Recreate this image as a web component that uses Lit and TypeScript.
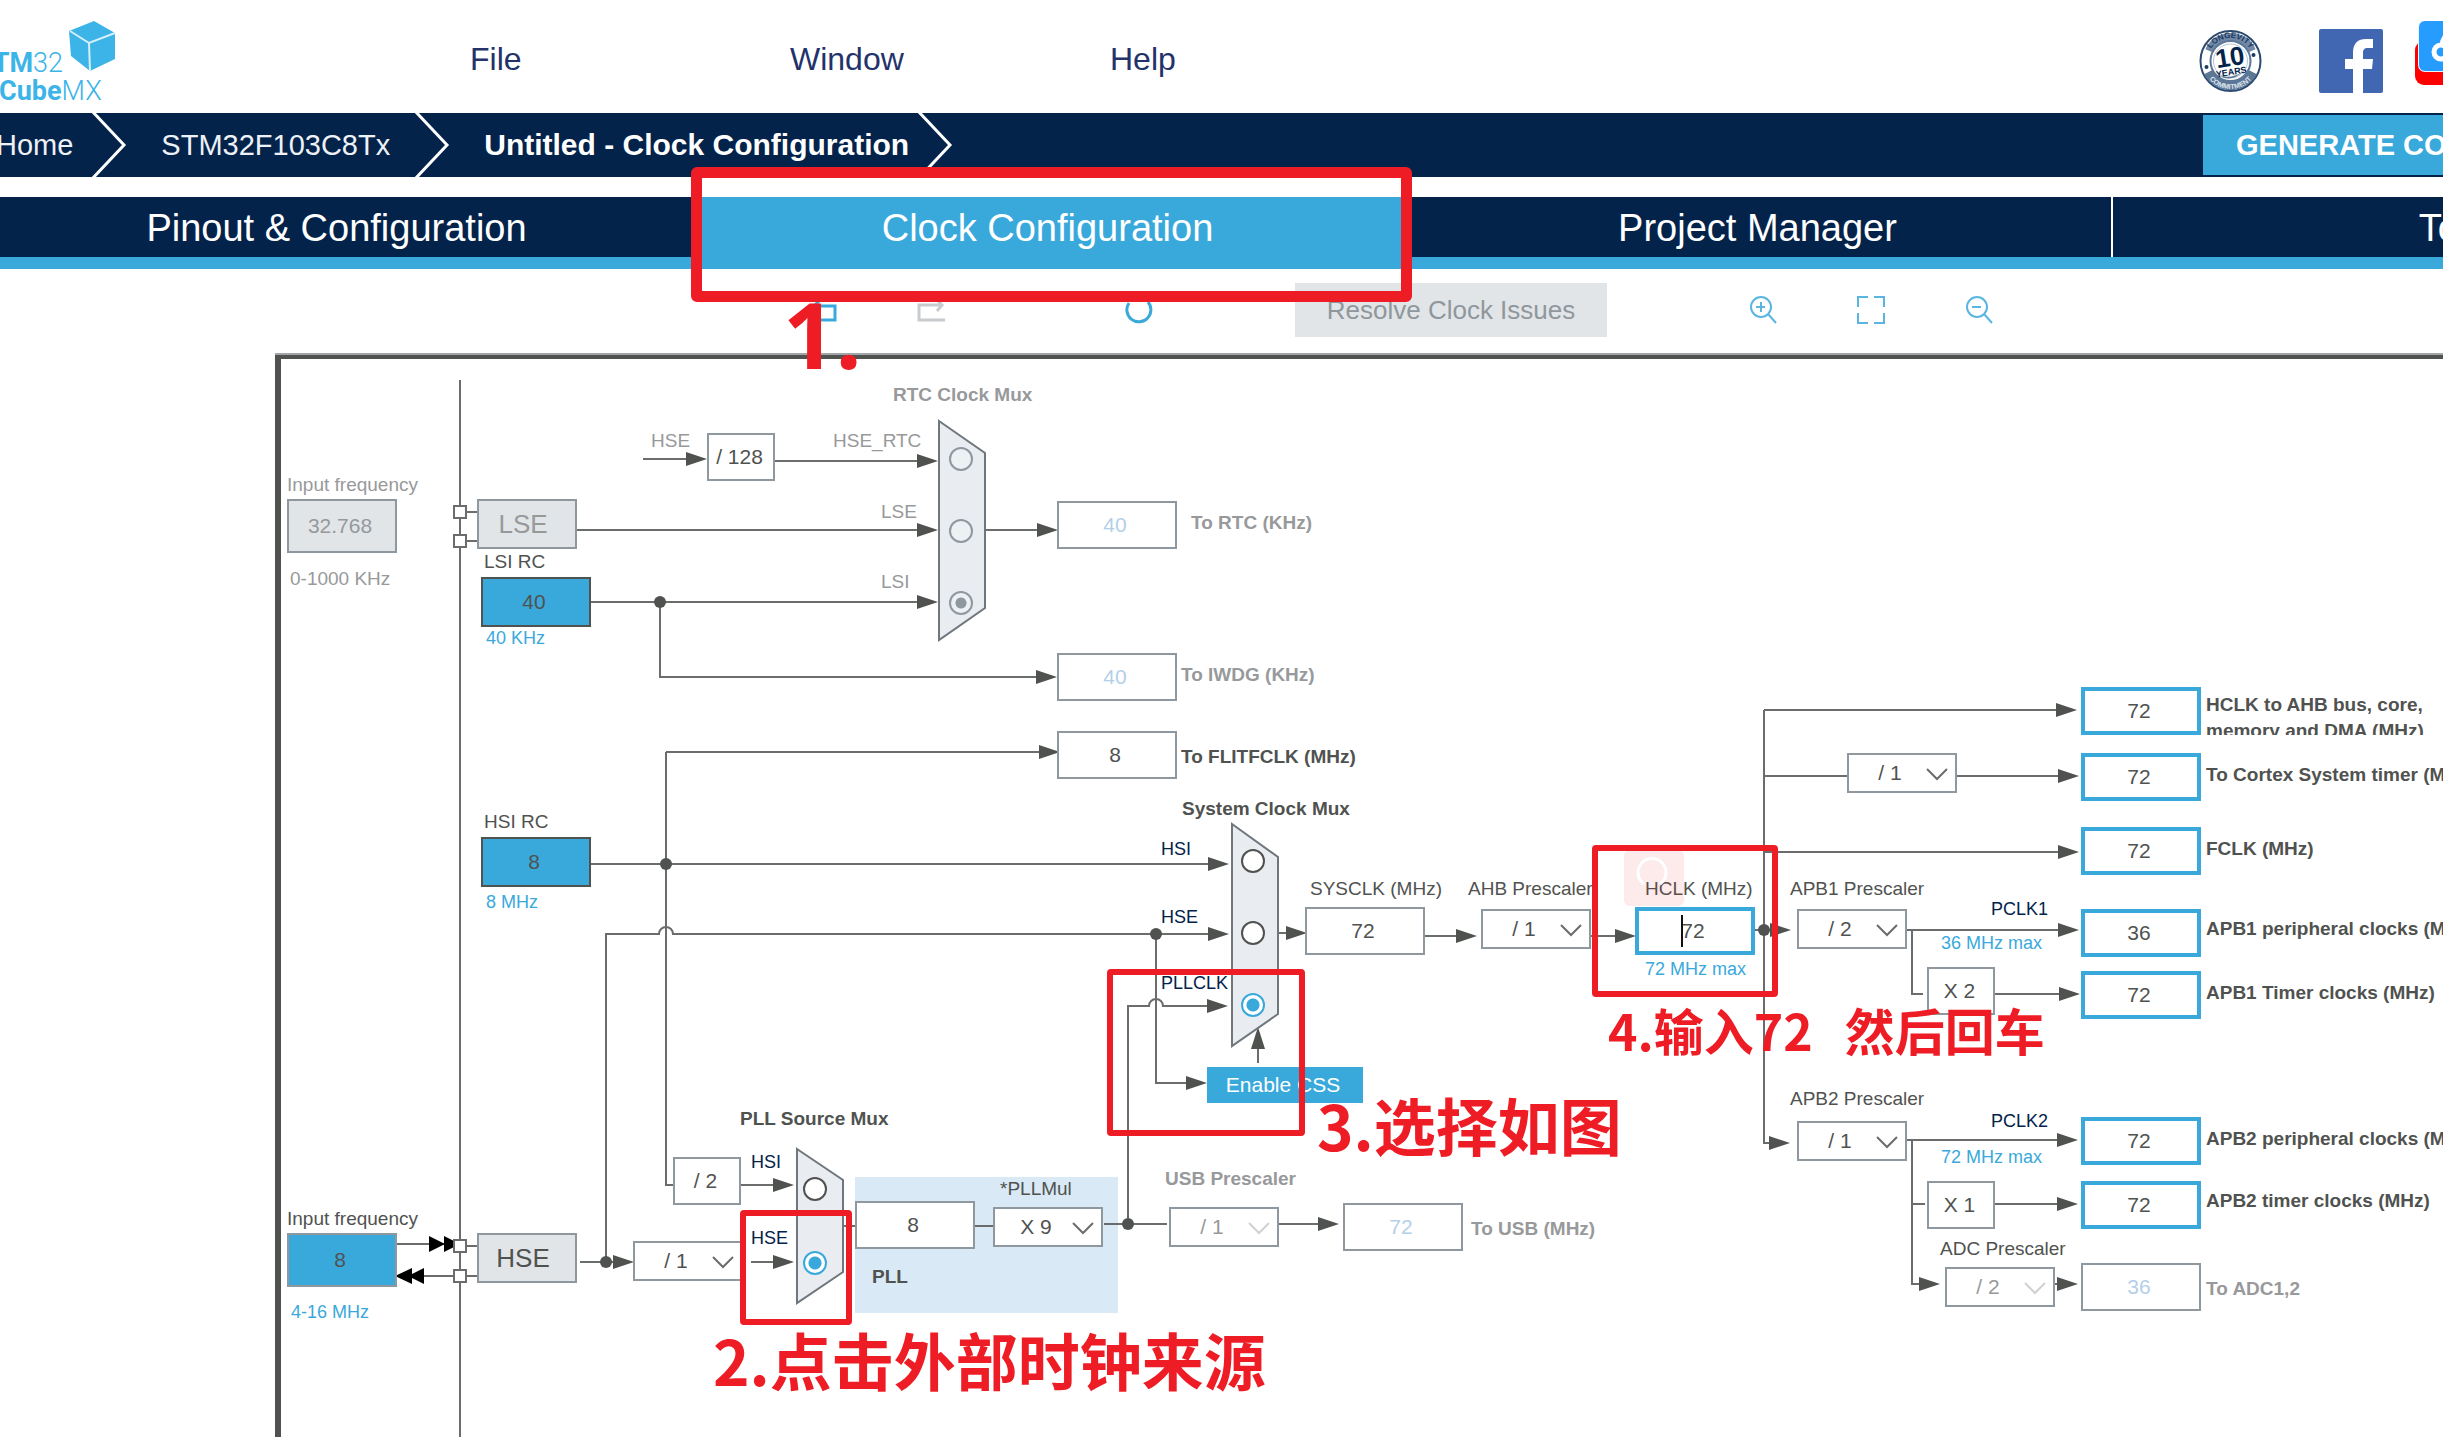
import { LitElement, html, svg, css } from "lit";
import { customElement, state } from "lit/decorators.js";
import { classMap } from "lit/directives/class-map.js";

/* Diagram coordinates are window coordinates; the canvas starts at this origin. */
const OX = 281;
const OY = 359;

const at = (x: number, y: number) => `left:${x - OX}px;top:${y - OY}px`;
const box = (x: number, y: number, w: number, h: number) =>
  `${at(x, y)};width:${w}px;height:${h}px`;

type Caption = { x: number; base: number; text: string; tone?: string; bold?: boolean; target?: string };
type Field = { id: string; name: string; x: number; y: number; w: number; h: number; value: string; kind: string };
type Divider = { id: string; name: string; x: number; y: number; options: string[]; off?: boolean };
type Factor = { x: number; y: number; text: string };
type Source = { group: string; value: string; x: number; y: number; off?: boolean };

const CAPTIONS: Caption[] = [
  { x: 287, base: 491, text: "Input frequency", tone: "muted", target: "lse-in" },
  { x: 290, base: 585, text: "0-1000 KHz", tone: "muted" },
  { x: 484, base: 568, text: "LSI RC", target: "lsi" },
  { x: 486, base: 644, text: "40 KHz", tone: "blue" },
  { x: 484, base: 828, text: "HSI RC", target: "hsi" },
  { x: 486, base: 908, text: "8 MHz", tone: "blue" },
  { x: 651, base: 447, text: "HSE", tone: "muted" },
  { x: 833, base: 447, text: "HSE_RTC", tone: "muted", target: "rtc-HSE_RTC" },
  { x: 881, base: 518, text: "LSE", tone: "muted", target: "rtc-LSE" },
  { x: 881, base: 588, text: "LSI", tone: "muted", target: "rtc-LSI" },
  { x: 893, base: 401, text: "RTC Clock Mux", tone: "muted", bold: true },
  { x: 1191, base: 529, text: "To RTC (KHz)", tone: "muted", bold: true, target: "to-rtc" },
  { x: 1181, base: 681, text: "To IWDG (KHz)", tone: "muted", bold: true, target: "to-iwdg" },
  { x: 1181, base: 763, text: "To FLITFCLK (MHz)", bold: true, target: "to-flitf" },
  { x: 1182, base: 815, text: "System Clock Mux", bold: true },
  { x: 1161, base: 855, text: "HSI", tone: "navy", target: "sys-HSI" },
  { x: 1161, base: 923, text: "HSE", tone: "navy", target: "sys-HSE" },
  { x: 1161, base: 989, text: "PLLCLK", tone: "navy", target: "sys-PLLCLK" },
  { x: 1310, base: 895, text: "SYSCLK (MHz)", target: "sysclk" },
  { x: 1468, base: 895, text: "AHB Prescaler", target: "ahb" },
  { x: 1645, base: 895, text: "HCLK (MHz)", target: "hclk" },
  { x: 1645, base: 975, text: "72 MHz max", tone: "blue" },
  { x: 1790, base: 895, text: "APB1 Prescaler", target: "apb1" },
  { x: 1991, base: 915, text: "PCLK1", tone: "navy" },
  { x: 1941, base: 949, text: "36 MHz max", tone: "blue" },
  { x: 1790, base: 1105, text: "APB2 Prescaler", target: "apb2" },
  { x: 1991, base: 1127, text: "PCLK2", tone: "navy" },
  { x: 1941, base: 1163, text: "72 MHz max", tone: "blue" },
  { x: 1940, base: 1255, text: "ADC Prescaler", target: "adc" },
  { x: 287, base: 1225, text: "Input frequency", target: "hse-in" },
  { x: 291, base: 1318, text: "4-16 MHz", tone: "blue" },
  { x: 740, base: 1125, text: "PLL Source Mux", bold: true },
  { x: 751, base: 1168, text: "HSI", tone: "navy", target: "pll-HSI" },
  { x: 751, base: 1244, text: "HSE", tone: "navy", target: "pll-HSE" },
  { x: 1000, base: 1195, text: "*PLLMul", target: "pllmul" },
  { x: 872, base: 1283, text: "PLL", bold: true },
  { x: 1165, base: 1185, text: "USB Prescaler", tone: "muted", bold: true, target: "usb" },
  { x: 1471, base: 1235, text: "To USB (MHz)", tone: "muted", bold: true, target: "to-usb" },
  { x: 2206, base: 781, text: "To Cortex System timer (MHz)", bold: true, target: "cortex" },
  { x: 2206, base: 855, text: "FCLK (MHz)", bold: true, target: "fclk" },
  { x: 2206, base: 935, text: "APB1 peripheral clocks (MHz)", bold: true, target: "apb1-per" },
  { x: 2206, base: 999, text: "APB1 Timer clocks (MHz)", bold: true, target: "apb1-tim" },
  { x: 2206, base: 1145, text: "APB2 peripheral clocks (MHz)", bold: true, target: "apb2-per" },
  { x: 2206, base: 1207, text: "APB2 timer clocks (MHz)", bold: true, target: "apb2-tim" },
  { x: 2206, base: 1295, text: "To ADC1,2", tone: "muted", bold: true, target: "to-adc" },
];

const FIELDS: Field[] = [
  { id: "lse-in", name: "LSE input frequency", x: 287, y: 499, w: 110, h: 54, value: "32.768", kind: "idle" },
  { id: "lsi", name: "LSI RC", x: 481, y: 577, w: 110, h: 50, value: "40", kind: "source" },
  { id: "hsi", name: "HSI RC", x: 481, y: 837, w: 110, h: 50, value: "8", kind: "source" },
  { id: "hse-in", name: "HSE input frequency", x: 287, y: 1233, w: 110, h: 54, value: "8", kind: "source editable" },
  { id: "to-rtc", name: "To RTC", x: 1057, y: 501, w: 120, h: 48, value: "40", kind: "off" },
  { id: "to-iwdg", name: "To IWDG", x: 1057, y: 653, w: 120, h: 48, value: "40", kind: "off" },
  { id: "to-flitf", name: "To FLITFCLK", x: 1057, y: 731, w: 120, h: 48, value: "8", kind: "" },
  { id: "sysclk", name: "SYSCLK", x: 1305, y: 907, w: 120, h: 48, value: "72", kind: "" },
  { id: "hclk", name: "HCLK", x: 1635, y: 907, w: 120, h: 48, value: "72", kind: "bus" },
  { id: "pll-in", name: "PLL input", x: 855, y: 1201, w: 120, h: 48, value: "8", kind: "" },
  { id: "to-usb", name: "To USB", x: 1343, y: 1203, w: 120, h: 48, value: "72", kind: "off" },
  { id: "ahb-bus", name: "HCLK to AHB bus", x: 2081, y: 687, w: 120, h: 48, value: "72", kind: "bus" },
  { id: "cortex", name: "Cortex System timer", x: 2081, y: 753, w: 120, h: 48, value: "72", kind: "bus" },
  { id: "fclk", name: "FCLK", x: 2081, y: 827, w: 120, h: 48, value: "72", kind: "bus" },
  { id: "apb1-per", name: "APB1 peripheral clocks", x: 2081, y: 909, w: 120, h: 48, value: "36", kind: "bus" },
  { id: "apb1-tim", name: "APB1 Timer clocks", x: 2081, y: 971, w: 120, h: 48, value: "72", kind: "bus" },
  { id: "apb2-per", name: "APB2 peripheral clocks", x: 2081, y: 1117, w: 120, h: 48, value: "72", kind: "bus" },
  { id: "apb2-tim", name: "APB2 timer clocks", x: 2081, y: 1181, w: 120, h: 48, value: "72", kind: "bus" },
  { id: "to-adc", name: "To ADC1,2", x: 2081, y: 1263, w: 120, h: 48, value: "36", kind: "off" },
];

const DIVIDERS: Divider[] = [
  { id: "cortex-div", name: "Cortex prescaler", x: 1847, y: 753, options: ["/ 1", "/ 8"] },
  { id: "ahb", name: "AHB Prescaler", x: 1481, y: 909, options: ["/ 1", "/ 2", "/ 4"] },
  { id: "apb1", name: "APB1 Prescaler", x: 1797, y: 909, options: ["/ 2", "/ 1", "/ 4"] },
  { id: "apb2", name: "APB2 Prescaler", x: 1797, y: 1121, options: ["/ 1", "/ 2", "/ 4"] },
  { id: "adc", name: "ADC Prescaler", x: 1945, y: 1267, options: ["/ 2", "/ 4", "/ 6"], off: true },
  { id: "hse-div", name: "HSE divider", x: 633, y: 1241, options: ["/ 1", "/ 2"] },
  { id: "pllmul", name: "PLLMul", x: 993, y: 1207, options: ["X 9", "X 8", "X 2"] },
  { id: "usb", name: "USB Prescaler", x: 1169, y: 1207, options: ["/ 1", "/ 1.5"], off: true },
];

const FACTORS: Factor[] = [
  { x: 707, y: 433, text: "/ 128" },
  { x: 673, y: 1157, text: "/ 2" },
  { x: 1927, y: 967, text: "X 2" },
  { x: 1927, y: 1181, text: "X 1" },
];

const SOURCES: Source[] = [
  { group: "rtc", value: "HSE_RTC", x: 961, y: 459, off: true },
  { group: "rtc", value: "LSE", x: 961, y: 531, off: true },
  { group: "rtc", value: "LSI", x: 961, y: 603, off: true },
  { group: "sys", value: "HSI", x: 1253, y: 861 },
  { group: "sys", value: "HSE", x: 1253, y: 933 },
  { group: "sys", value: "PLLCLK", x: 1253, y: 1005 },
  { group: "pll", value: "HSI", x: 815, y: 1189 },
  { group: "pll", value: "HSE", x: 815, y: 1263 },
];

const WIRES = [
  "M460 380V1500",
  "M466 512H478M466 541H478M466 1246H478M466 1276H478",
  "M643 459H690",
  "M775 461H920",
  "M577 530H920",
  "M986 530H1040",
  "M591 602H920",
  "M660 602V677H1040",
  "M591 864H1210",
  "M666 752V1185H674",
  "M666 752H1045",
  "M606 1262V934H659A7 7 0 0 1 673 934H1210",
  "M1156 934V1083H1190",
  "M1128 1224V1006H1149A7 7 0 0 1 1163 1006H1210",
  "M1258 1063V1045",
  "M1278 933H1295",
  "M1425 936H1460",
  "M1591 936H1618",
  "M1755 930H1775",
  "M1764 710V1143H1772",
  "M1764 710H2060",
  "M1764 776H1848M1957 776H2060",
  "M1764 852H2062",
  "M1907 930H2062",
  "M1912 930V994H1923M1995 994H2062",
  "M1907 1140H2060",
  "M1912 1140V1284H1922",
  "M1912 1204H1925M1995 1204H2060",
  "M2055 1284H2060",
  "M580 1262H622",
  "M741 1185H776",
  "M751 1262H776",
  "M843 1226H856M975 1226H994",
  "M1104 1224H1167",
  "M1279 1224H1320",
];

/* Tip of each right-pointing arrowhead. */
const ARROWS = [
  [707, 459], [938, 461], [938, 530], [938, 602], [1058, 530], [1057, 677], [1060, 752],
  [1229, 864], [1229, 934], [1228, 1006], [1207, 1083], [1307, 933], [1477, 936], [1636, 936],
  [1791, 930], [1790, 1143], [2077, 710], [2079, 776], [2079, 852], [2079, 930], [2080, 994],
  [2078, 1140], [2078, 1204], [2078, 1284], [1940, 1284], [634, 1262], [794, 1185], [794, 1262],
  [1339, 1224],
];

const DOTS = [[660, 602], [666, 864], [1156, 934], [1764, 930], [606, 1262], [1128, 1224]];
const PINS = [[454, 506], [454, 535], [454, 1240], [454, 1270]];

@customElement("crumb-arrow")
class CrumbArrow extends LitElement {
  static styles = css`
    :host { display: block; width: 36px; height: 64px; flex: none; }
    svg { display: block; }
  `;
  render() {
    return html`<svg width="36" height="64" viewBox="0 0 36 64" fill="none" stroke="#fff" stroke-width="3" aria-hidden="true">
      <path d="M1 -2L33 32L1 66" />
    </svg>`;
  }
}

@customElement("app-header")
class AppHeader extends LitElement {
  static styles = css`
    :host { display: block; }
    .bar { display: flex; align-items: center; height: 113px; overflow: hidden; }
    .logo { flex: none; width: 470px; height: 113px; display: block; }
    .menu { display: flex; margin-top: 5px; }
    .menu button {
      width: 320px; padding: 0; border: 0; background: none; text-align: left;
      font: 32px/40px "Liberation Sans", Arial, sans-serif; color: #24326a;
    }
    .links { display: flex; margin-left: auto; flex: none; align-items: center; margin-right: -37px; height: 113px; }
    .links a, .links svg { display: block; }
    .ten { margin: 8px 57px 0 0; }
    .fb { margin: 9px 32px 0 0; }
    .tube { margin: -6px 0 0; }
  `;
  render() {
    return html`<header class="bar">
      <svg class="logo" viewBox="0 0 470 113" role="img" aria-label="STM32 CubeMX">
        <g fill="#3cb4e7" font-family="Roboto, 'Liberation Sans', sans-serif" font-size="27">
          <text x="63" y="72" text-anchor="end"><tspan font-weight="700">STM</tspan><tspan font-weight="300">32</tspan></text>
          <text x="-1" y="100"><tspan font-weight="700">Cube</tspan><tspan font-weight="300">MX</tspan></text>
          <path d="M94 21L115 33V59L90 71L71 56L69 31Z" />
        </g>
        <path d="M70 31L89 43L115 33M89 43L90 71" fill="none" stroke="#d6effa" stroke-width="2" />
      </svg>
      <nav class="menu" aria-label="Main menu">
        <button>File</button><button>Window</button><button>Help</button>
      </nav>
      <div class="links">
        <a class="ten" href="#longevity" aria-label="10 years longevity commitment">
          <svg width="63" height="64" viewBox="0 0 62 64" font-family="'Liberation Sans',sans-serif" font-weight="700">
            <circle cx="31" cy="32" r="30" fill="#fff" stroke="#2c4a70" stroke-width="2" />
            <path d="M10 22A23 23 0 0 1 52 22" fill="none" stroke="#7088a5" stroke-width="9" />
            <path d="M9 43A25 25 0 0 0 53 43" fill="none" stroke="#5c7696" stroke-width="10" />
            <circle cx="31" cy="32" r="20" fill="#fff" stroke="#5c7696" stroke-width="2" />
            <circle cx="31" cy="32" r="17" fill="none" stroke="#b7c3d2" stroke-width="1" />
            <path id="arc-top" d="M8 32A23 23 0 0 1 54 32" fill="none" />
            <path id="arc-low" d="M3 32A28 28 0 0 0 59 32" fill="none" />
            <text font-size="8" fill="#1b3a63"><textPath href="#arc-top" startOffset="50%" text-anchor="middle">LONGEVITY</textPath></text>
            <text font-size="7" fill="#dfe6ee"><textPath href="#arc-low" startOffset="50%" text-anchor="middle">COMMITMENT</textPath></text>
            <circle cx="7" cy="38" r="2" fill="#1b3a63" /><circle cx="54" cy="26" r="2" fill="#1b3a63" />
            <g transform="rotate(-9 31 32)" fill="#03234b" text-anchor="middle">
              <text x="31" y="37" font-size="26">10</text>
              <text x="30" y="46" font-size="9">YEARS</text>
            </g>
            <path d="M20 47Q32 54 44 42Q34 50 20 47Z" fill="#5c7696" />
          </svg>
        </a>
        <a class="fb" href="#facebook" aria-label="Facebook">
          <svg width="64" height="64" viewBox="0 0 64 64">
            <rect width="64" height="64" rx="2" fill="#4267b2" />
            <path d="M34 64V40H26V30H34V24C34 14 39 10 47 10H54V19H49C45 19 44 21 44 24V30H54L53 40H44V64Z" fill="#fff" />
          </svg>
        </a>
        <a class="tube" href="#share" aria-label="Video channel and cloud storage">
          <svg width="65" height="66" viewBox="0 0 65 66">
            <rect x="0" y="20" width="90" height="44" rx="9" fill="#f00" />
            <rect x="3" y="-1" width="80" height="52" rx="7" fill="#eaf4ff" />
            <rect x="4" y="0" width="80" height="50" rx="6" fill="#279cff" />
            <g fill="none" stroke="#fff" stroke-width="5"><circle cx="26" cy="31" r="7" /><path d="M27 24A13 13 0 0 1 50 16" /></g>
          </svg>
        </a>
      </div>
    </header>`;
  }
}

@customElement("app-nav")
class AppNav extends LitElement {
  static styles = css`
    :host { display: block; font-family: "Liberation Sans", Arial, sans-serif; overflow: hidden; }
    .crumbs { display: flex; align-items: center; height: 64px; background: #03234b; color: #fff; }
    .crumbs a { color: #eef1f5; text-decoration: none; font-size: 29px; line-height: 40px; white-space: nowrap; }
    .crumbs .home { margin: 0 18px 0 -4px; }
    .crumbs .chip { margin: 0 24px 0 34px; }
    .crumbs .current { margin: 0 8px 0 34px; font-size: 30px; font-weight: 700; color: #fff; }
    .generate {
      margin-left: auto; flex: none; height: 60px; width: 300px; margin-right: -60px; padding: 0 0 0 33px;
      border: 0; background: #39a9dc; color: #fff; text-align: left; white-space: nowrap;
      font: 700 29px/40px "Liberation Sans", Arial, sans-serif;
    }
    .tabs {
      display: grid; grid-template-columns: 709fr 713fr 709fr 700fr; width: calc(100% + 388px);
      margin: 20px 0 0 -18px; border-bottom: 12px solid #39a9dc; background: #03234b;
    }
    .tabs button {
      height: 60px; padding: 2px 0 0; border: 0; background: #03234b; color: #fff;
      font: 38px/58px "Liberation Sans", Arial, sans-serif;
    }
    .tabs .active { background: #39a9dc; }
    .tabs .split { border-right: 2px solid #fff; }
  `;
  render() {
    return html`
      <nav class="crumbs" aria-label="Breadcrumb">
        <a class="home" href="#home">Home</a><crumb-arrow></crumb-arrow>
        <a class="chip" href="#chip">STM32F103C8Tx</a><crumb-arrow></crumb-arrow>
        <a class="current" href="#clock">Untitled - Clock Configuration</a><crumb-arrow></crumb-arrow>
        <button class="generate">GENERATE CODE</button>
      </nav>
      <div class="tabs" role="tablist">
        <button role="tab">Pinout &amp; Configuration</button>
        <button role="tab" class="active" aria-selected="true">Clock Configuration</button>
        <button role="tab" class="split">Project Manager</button>
        <button role="tab">Tools</button>
      </div>
    `;
  }
}

@customElement("clock-toolbar")
class ClockToolbar extends LitElement {
  static styles = css`
    :host { display: block; }
    .bar { display: flex; align-items: center; gap: 142px; height: 82px; padding: 0 0 4px 809px; }
    .group { display: flex; gap: 80px; }
    .reload { margin-left: 38px; }
    button { padding: 0; border: 0; background: none; flex: none; }
    svg { display: block; fill: none; stroke: #39a9dc; stroke-width: 2; }
    .thin { stroke: #5ab6e1; }
    .faded svg { stroke: #c9cccf; }
    .resolve {
      width: 312px; height: 54px; background: #e1e5e8; color: #8f979c; white-space: nowrap;
      font: 26px/54px "Liberation Sans", Arial, sans-serif;
    }
  `;
  render() {
    return html`<div class="bar" role="toolbar" aria-label="Clock tools">
      <div class="group">
        <button aria-label="Undo"><svg width="28" height="28"><path d="M2 24H26V10H5M11 4L5 10L11 16" stroke-width="3" /></svg></button>
        <button class="faded" aria-label="Redo" disabled><svg width="28" height="28"><path d="M28 24H2V9H25M18 2L25 9L20 15" stroke-width="3" /></svg></button>
      </div>
      <button class="reload" aria-label="Reset"><svg width="28" height="28"><path d="M4 7A12 12 0 1 0 23 6" stroke-width="3" /></svg></button>
      <button class="resolve" disabled>Resolve Clock Issues</button>
      <div class="group">
        <button aria-label="Zoom in"><svg class="thin" width="28" height="28"><circle cx="12" cy="11" r="10" /><path d="M7 11H16M12 6V16M19 18L27 27" /></svg></button>
        <button aria-label="Fit"><svg class="thin" width="28" height="28"><path d="M1 11V1H11M17 1H27V11M27 17V27H17M11 27H1V17" /></svg></button>
        <button aria-label="Zoom out"><svg class="thin" width="28" height="28"><circle cx="12" cy="11" r="10" /><path d="M7 11H16M19 18L27 27" /></svg></button>
      </div>
    </div>`;
  }
}

@customElement("clock-diagram")
class ClockDiagram extends LitElement {
  static styles = css`
    :host {
      display: block; position: relative; overflow: hidden; min-height: 1000px;
      font-family: "Liberation Sans", Arial, sans-serif; color: #505250;
    }
    .wires, .caption, .cell, .factor, .divider, .chevron, .mux, .osc, .css-button, .pll, .caret, .wrapped {
      position: absolute; box-sizing: border-box;
    }
    .wires { left: 0; top: 0; width: 100%; height: 100%; overflow: hidden; }
    .wire { fill: none; stroke: #6b6d6c; stroke-width: 2; }
    .head { fill: #505250; }
    .pin { fill: #fff; stroke: #6b6d6c; stroke-width: 2; }
    .shape { fill: #e9edf1; stroke: #6f777c; stroke-width: 2; }
    .ext { fill: #000; }
    .caption { font-size: 19px; line-height: 24px; white-space: nowrap; }
    .bold { font-weight: 700; }
    .muted { color: #97999b; }
    .blue { color: #39a9dc; font-size: 18px; }
    .navy { color: #03234b; font-size: 18px; }
    .wrapped { width: 236px; height: 43px; overflow: hidden; font-size: 19px; line-height: 26px; font-weight: 700; white-space: nowrap; }
    .cell {
      border: 2px solid #8f979f; background: #fff; color: #505250; padding: 0 4px 0 0; margin: 0;
      text-align: center; font: 21px/24px "Liberation Sans", Arial, sans-serif; border-radius: 0; outline: 0;
    }
    .bus { border: 4px solid #39a9dc; }
    .off { color: #b4cfe9; }
    .idle { background: #e1e5e8; color: #95999c; }
    .source { background: #39a9dc; border-color: #505250; }
    .editable { border-color: #8f979f; }
    .factor {
      width: 68px; height: 48px; border: 2px solid #8f979f; background: #fff; padding-right: 3px;
      display: flex; align-items: center; justify-content: center; font-size: 21px;
    }
    .divider {
      width: 110px; height: 40px; border: 2px solid #8f979f; border-radius: 0; background: #fff; color: #505250;
      appearance: none; padding: 0 40px 0 16px; margin: 0; text-align: center; opacity: 1;
      font: 21px/36px "Liberation Sans", Arial, sans-serif;
    }
    .divider:disabled { color: #97999b; }
    .chevron { fill: none; stroke: #6b6d6c; stroke-width: 2; pointer-events: none; }
    .pale { stroke: #cfd1d2; }
    .mux {
      appearance: none; width: 24px; height: 24px; margin: 0; border: 2px solid #505250; border-radius: 50%;
      background: #fff;
    }
    .mux:checked { border-color: #39a9dc; background: radial-gradient(circle, #39a9dc 6px, #fff 7px); }
    .mux:disabled { border-color: #8f979f; background: #eef1f4; }
    .mux:disabled:checked { background: radial-gradient(circle, #8f979f 5px, #eef1f4 6px); }
    .osc {
      width: 100px; height: 50px; border: 2px solid #8f979f; background: #e1e5e8; color: #505250; padding: 0 8px 0 0;
      font: 26px/40px "Liberation Sans", Arial, sans-serif;
    }
    .osc:disabled { color: #97999b; }
    .css-button {
      border: 0; padding: 0 4px 0 0; background: #39a9dc; color: #fff;
      font: 21px/36px "Liberation Sans", Arial, sans-serif;
    }
    .pll { background: #dae9f6; }
    .caret { width: 2px; height: 32px; background: #111; }
  `;

  @state() private picked: Record<string, string> = { rtc: "LSI", sys: "PLLCLK", pll: "HSE" };

  private pick(group: string, value: string) {
    this.picked = { ...this.picked, [group]: value };
  }

  private caption(c: Caption) {
    const cls = classMap({ caption: true, bold: !!c.bold, [c.tone ?? "plain"]: true });
    const pos = at(c.x, c.base - 18);
    return c.target
      ? html`<label class=${cls} style=${pos} for=${c.target}>${c.text}</label>`
      : html`<span class=${cls} style=${pos}>${c.text}</span>`;
  }

  render() {
    return html`
      <div class="pll" style=${box(855, 1177, 263, 136)}></div>
      <svg class="wires" aria-hidden="true">
        <g transform="translate(${-OX} ${-OY})">
          <path class="wire" d=${WIRES.join("")} />
          ${ARROWS.map(([x, y]) => svg`<path class="head" d="M${x} ${y}l-21 -7v14z" />`)}
          <path class="head" d="M1258 1027l-7 22h14z" />
          ${DOTS.map(([x, y]) => svg`<circle class="head" cx=${x} cy=${y} r="6" />`)}
          <path class="wire" d="M397 1244H454M420 1276H454" />
          <path class="ext" d="M429 1236L445 1244L429 1252ZM444 1236L460 1244L444 1252ZM412 1268L395 1276L412 1284ZM424 1268L408 1276L424 1284Z" />
          ${PINS.map(([x, y]) => svg`<rect class="pin" x=${x} y=${y} width="12" height="12" />`)}
          <path class="shape" d="M939 421L985 453V608L939 640Z" />
          <path class="shape" d="M1232 824L1278 857V1014L1232 1046Z" />
          <path class="shape" d="M797 1149L843 1180V1272L797 1303Z" />
        </g>
      </svg>
      ${CAPTIONS.map((c) => this.caption(c))}
      <label class="wrapped" for="ahb-bus" style=${at(2206, 692)}>HCLK to AHB bus, core,<br />memory and DMA (MHz)</label>
      <button class="osc" style=${at(477, 499)} disabled>LSE</button>
      <button class="osc" style=${at(477, 1233)}>HSE</button>
      <button class="css-button" style=${box(1207, 1067, 156, 36)}>Enable CSS</button>
      ${FACTORS.map((f) => html`<div class="factor" style=${at(f.x, f.y)}>${f.text}</div>`)}
      ${FIELDS.map(
        (f) => html`<input class="cell ${f.kind}" id=${f.id} aria-label=${f.name} style=${box(f.x, f.y, f.w, f.h)} .value=${f.value} />`,
      )}
      <span class="caret" style=${at(1681, 915)}></span>
      ${DIVIDERS.map(
        (d) => html`<select class="divider" id=${d.id} aria-label=${d.name} style=${at(d.x, d.y)} ?disabled=${!!d.off}>
            ${d.options.map((o) => html`<option>${o}</option>`)}
          </select>
          <svg class=${classMap({ chevron: true, pale: !!d.off })} width="22" height="14" style=${at(d.x + 79, d.y + 14)}>
            <path d="M1 2L11 12L21 2" />
          </svg>`,
      )}
      ${SOURCES.map(
        (s) => html`<input class="mux" type="radio" id="${s.group}-${s.value}" name=${s.group} aria-label="${s.group} ${s.value}"
          style=${at(s.x - 12, s.y - 12)} ?disabled=${!!s.off} .checked=${this.picked[s.group] === s.value}
          @change=${() => this.pick(s.group, s.value)} />`,
      )}
    `;
  }
}

@customElement("guide-notes")
class GuideNotes extends LitElement {
  static styles = css`
    :host { position: absolute; inset: 0; overflow: hidden; pointer-events: none; }
    .frame, .note, .hint { position: absolute; box-sizing: border-box; }
    .frame { border: 6px solid #ee1c24; border-radius: 4px; }
    .thick { border-width: 11px; border-radius: 6px; }
    .note {
      display: flex; gap: 32px; color: #ee1c24; font-family: "Noto Sans CJK SC", sans-serif;
      font-weight: 700; white-space: nowrap; font-size: 62px; line-height: 80px;
    }
    .medium { font-size: 50px; line-height: 60px; }
    .large { font-family: "Open Sans", sans-serif; font-size: 92px; line-height: 100px; }
    .hint { left: 1624px; top: 850px; width: 60px; height: 56px; border-radius: 6px; background: #ee1c2418; }
    .hint svg { display: block; }
  `;
  render() {
    const frame = (x: number, y: number, w: number, h: number) => `left:${x}px;top:${y}px;width:${w}px;height:${h}px`;
    return html`
      <div class="hint"><svg width="60" height="56" fill="none" stroke="#fff" stroke-width="3"><path d="M20 34A14 14 0 1 1 36 34" /></svg></div>
      <div class="frame thick" style=${frame(691, 167, 721, 135)}></div>
      <div class="frame" style=${frame(740, 1210, 112, 115)}></div>
      <div class="frame" style=${frame(1107, 969, 198, 167)}></div>
      <div class="frame" style=${frame(1592, 845, 186, 152)}></div>
      <span class="note large" style="left:783px;top:284px">1.</span>
      <span class="note" style="left:713px;top:1319px">2.点击外部时钟来源</span>
      <span class="note" style="left:1317px;top:1084px">3.选择如图</span>
      <span class="note medium" style="left:1608px;top:999px"><span>4.输入72</span><span>然后回车</span></span>
    `;
  }
}

@customElement("app-root")
class AppRoot extends LitElement {
  static styles = css`
    :host { display: flex; flex-direction: column; position: relative; height: 100vh; overflow: hidden; background: #fff; }
    .workspace {
      display: flex; flex-direction: column; flex: 1; min-height: 0; margin-left: 275px;
      border-left: 6px solid #505250; border-top: 4px solid #505250; box-shadow: 0 -2px 0 #a3a6a8;
    }
    .workspace clock-diagram { flex: 1; }
  `;
  render() {
    return html`
      <app-header></app-header>
      <app-nav></app-nav>
      <clock-toolbar></clock-toolbar>
      <main class="workspace"><clock-diagram></clock-diagram></main>
      <guide-notes></guide-notes>
    `;
  }
}
